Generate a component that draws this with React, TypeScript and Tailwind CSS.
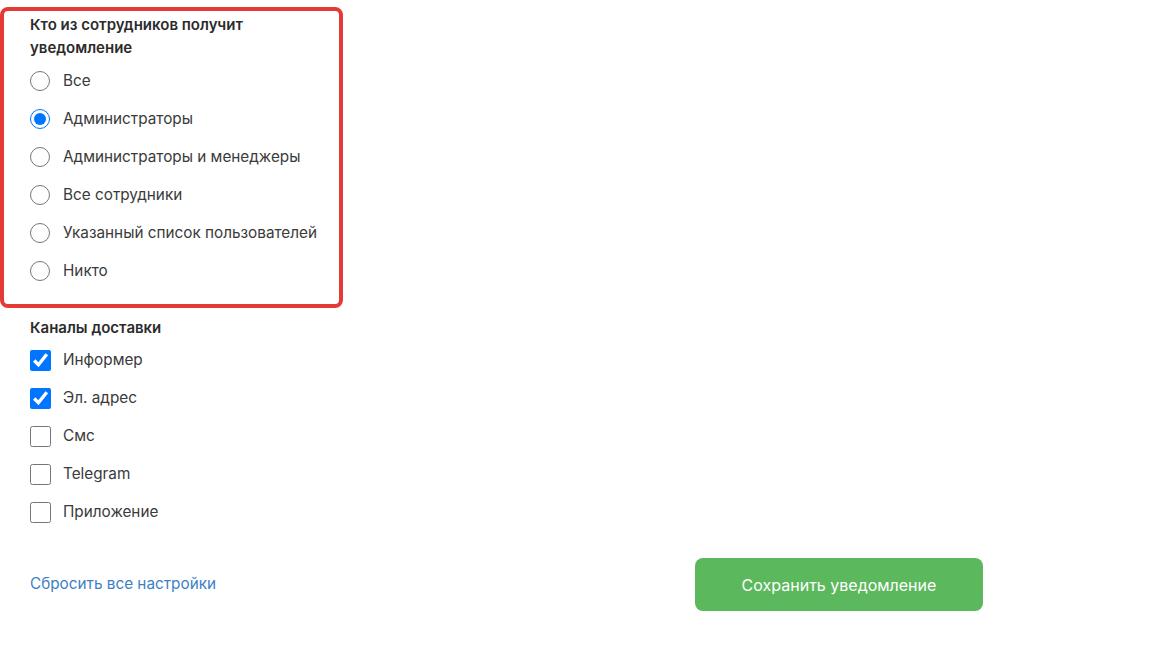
import { useState } from "react";

const recipients = [
  "Все",
  "Администраторы",
  "Администраторы и менеджеры",
  "Все сотрудники",
  "Указанный список пользователей",
  "Никто",
];

const channels = ["Информер", "Эл. адрес", "Смс", "Telegram", "Приложение"];

export default function App() {
  const [who, setWho] = useState(1);
  const [checked, setChecked] = useState<boolean[]>([true, true, false, false, false]);

  const toggle = (i: number) => {
    setChecked((prev) => prev.map((v, idx) => (idx === i ? !v : v)));
  };

  return (
    <div className="min-h-[645px] bg-white pt-[7px] font-['Inter','Noto_Sans',sans-serif] text-[#333]">
      <section className="w-[343px] rounded-[8px] border-[4px] border-[#e53935] pl-[26px] pt-[2px] pb-[14px]">
        <h3 className="text-[15px] font-semibold leading-[23px] text-[#2b2b2b]">
          Кто из сотрудников получит
          <br />
          уведомление
        </h3>
        <div className="mt-[3px] flex flex-col">
          {recipients.map((label, i) => (
            <label key={label} className="flex h-[38px] cursor-pointer items-center gap-[13px]">
              <input
                type="radio"
                name="who"
                checked={who === i}
                onChange={() => setWho(i)}
                className="m-0 h-5 w-5 shrink-0"
              />
              <span className="text-[15.3px] leading-5 text-[#3a3a3a]">{label}</span>
            </label>
          ))}
        </div>
      </section>

      <section className="mt-[8px] pl-[30px]">
        <h3 className="text-[15px] font-semibold leading-[23px] text-[#2b2b2b]">Каналы доставки</h3>
        <div className="mt-[2px] flex flex-col">
          {channels.map((label, i) => (
            <label key={label} className="flex h-[38px] cursor-pointer items-center gap-[12px]">
              <input
                type="checkbox"
                checked={checked[i]}
                onChange={() => toggle(i)}
                className="m-0 h-[21px] w-[21px] shrink-0"
              />
              <span className="text-[15.3px] leading-5 text-[#3a3a3a]">{label}</span>
            </label>
          ))}
        </div>
      </section>

      <div className="mt-[27px] flex w-[983px] items-center justify-between pl-[30px]">
        <a href="#" className="text-[15.3px] text-[#3d7fc4]">
          Сбросить все настройки
        </a>
        <button className="h-[53px] w-[288px] rounded-[8px] bg-[#5cb85c] text-[16px] font-normal text-white">
          Сохранить уведомление
        </button>
      </div>
    </div>
  );
}
